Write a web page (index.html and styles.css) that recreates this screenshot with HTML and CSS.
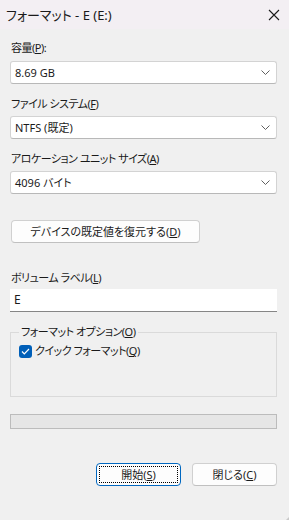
FILE: index.html
```html
<!DOCTYPE html>
<html lang="ja">
<head>
    <meta charset="UTF-8">
    <meta name="viewport" content="width=device-width, initial-scale=1.0">
    <title>フォーマット - E (E:)</title>
    <link rel="stylesheet" href="styles.css">
</head>
<body>
    <div class="window">
        <div class="titlebar">
            <span class="title">フォーマット - E (E:)</span>
            <svg class="close" width="12" height="12" viewBox="0 0 12 12">
                <path d="M1 1 L11 11 M11 1 L1 11" stroke="#1a1a1a" stroke-width="1.1" fill="none"/>
            </svg>
        </div>
        <div class="content">
            <div class="field first">
                <label>容量(<u>P</u>):</label>
                <div class="select">
                    <span>8.69 GB</span>
                    <svg width="9" height="5" viewBox="0 0 9 5"><path d="M0.5 0.5 L4.5 4.5 L8.5 0.5" stroke="#5f5f5f" fill="none"/></svg>
                </div>
            </div>
            <div class="field">
                <label>ファイル システム(<u>F</u>)</label>
                <div class="select">
                    <span>NTFS (既定)</span>
                    <svg width="9" height="5" viewBox="0 0 9 5"><path d="M0.5 0.5 L4.5 4.5 L8.5 0.5" stroke="#5f5f5f" fill="none"/></svg>
                </div>
            </div>
            <div class="field">
                <label>アロケーション ユニット サイズ(<u>A</u>)</label>
                <div class="select">
                    <span>4096 バイト</span>
                    <svg width="9" height="5" viewBox="0 0 9 5"><path d="M0.5 0.5 L4.5 4.5 L8.5 0.5" stroke="#5f5f5f" fill="none"/></svg>
                </div>
            </div>
            <button class="btn restore">デバイスの既定値を復元する(<u>D</u>)</button>
            <div class="field volume">
                <label>ボリューム ラベル(<u>L</u>)</label>
                <div class="textbox">E</div>
            </div>
            <fieldset class="options">
                <legend>フォーマット オプション(<u>O</u>)</legend>
                <div class="check-row">
                    <span class="checkbox">
                        <svg width="9" height="7" viewBox="0 0 9 7"><path d="M1 3.5 L3.3 5.8 L8 1" stroke="#fff" stroke-width="1.2" fill="none"/></svg>
                    </span>
                    <span class="check-label">クイック フォーマット(<u>Q</u>)</span>
                </div>
            </fieldset>
            <div class="progress"></div>
            <div class="actions">
                <button class="btn primary"><span class="focus">開始(<u>S</u>)</span></button>
                <button class="btn">閉じる(<u>C</u>)</button>
            </div>
        </div>
        <div class="grip"></div>
    </div>
</body>
</html>
```

FILE: styles.css
```css
body {
    margin: 0;
    background: #f0f0f0;
    font-family: "Noto Sans", "Noto Sans CJK JP", sans-serif;
    font-feature-settings: "palt";
    font-size: 11px;
    color: #1a1a1a;
}
.window {
    width: 289px;
    height: 520px;
    position: relative;
    overflow: hidden;
}
.titlebar {
    height: 29px;
    background: #f3eff3;
    display: flex;
    align-items: center;
    justify-content: space-between;
    padding: 0 9px 0 6px;
}
.title {
    font-size: 13px;
    line-height: 16px;
}
.content {
    padding: 0 12px 0 10px;
}
.field {
    margin-top: 12px;
}
.field.first {
    margin-top: 11px;
}
.field label {
    display: block;
    line-height: 16px;
    height: 16px;
    margin-bottom: 4px;
    padding-left: 1px;
    letter-spacing: -0.5px;
}
.field.first label {
    margin-bottom: 5px;
}
u {
    text-decoration-thickness: 1px;
    text-underline-offset: 1px;
}
.select {
    height: 23px;
    box-sizing: border-box;
    background: #fff;
    border: 1px solid #d3d3d3;
    border-bottom-color: #b8b8b8;
    border-radius: 3px;
    display: flex;
    align-items: center;
    justify-content: space-between;
    padding: 0 6px 0 4px;
    line-height: 16px;
}
.btn {
    font-family: inherit;
    font-feature-settings: "palt";
    font-size: 11px;
    color: #1a1a1a;
    background: #fdfdfd;
    border: 1px solid #d0d0d0;
    border-bottom-color: #c0c0c0;
    border-radius: 4px;
    height: 23px;
    box-sizing: border-box;
    padding: 0;
    line-height: 16px;
}
.restore {
    display: block;
    margin: 26px 0 0 1px;
    width: 189px;
}
.field.volume {
    margin-top: 27px;
}
.field.volume label {
    margin-bottom: 3px;
}
.textbox {
    height: 23px;
    box-sizing: border-box;
    background: #fff;
    border-bottom: 1px solid #868686;
    padding: 0 0 0 4px;
    line-height: 21px;
    font-size: 12px;
}
.options {
    margin: 13px 0 0;
    padding: 4px 0 0 8px;
    height: 72px;
    box-sizing: border-box;
    border: 1px solid #dadada;
    border-radius: 0;
}
.options legend {
    padding: 0 2px;
    margin-left: 0;
    line-height: 14px;
    letter-spacing: -0.5px;
}
.check-row {
    display: flex;
    align-items: center;
    gap: 3px;
    line-height: 16px;
}
.check-label {
    letter-spacing: -0.5px;
}
.checkbox {
    width: 13px;
    height: 13px;
    border-radius: 3px;
    background: #005fb8;
    display: flex;
    align-items: center;
    justify-content: center;
}
.progress {
    margin-top: 17px;
    height: 15px;
    box-sizing: border-box;
    background: #e6e6e6;
    border: 1px solid #bcbcbc;
}
.actions {
    margin-top: 34px;
    display: flex;
    justify-content: flex-end;
    gap: 11px;
}
.actions .btn {
    width: 85px;
}
.btn.primary {
    border: 1px solid #0067c0;
    padding: 2px;
}
.focus {
    display: block;
    height: 100%;
    box-sizing: border-box;
    border: 1px dotted #000;
    line-height: 15px;
}
.grip {
    position: absolute;
    right: 0;
    bottom: 0;
    width: 0;
    height: 0;
    border-left: 3px solid transparent;
    border-bottom: 3px solid #c8c8c8;
}
```
